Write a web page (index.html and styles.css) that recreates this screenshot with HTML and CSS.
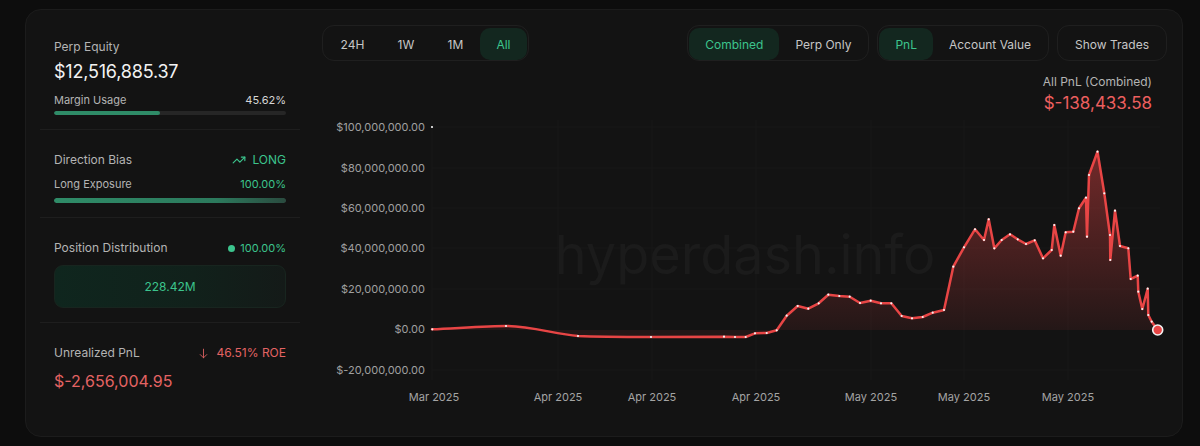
FILE: index.html
```html
<!DOCTYPE html>
<html lang="en">
<head>
<meta charset="utf-8">
<title>Hyperdash</title>
<link rel="stylesheet" href="styles.css">
</head>
<body>
<div class="card">
  <aside class="stats">
    <section class="sec sec-first">
      <div class="label">Perp Equity</div>
      <div class="big">$12,516,885.37</div>
      <div class="row small"><span>Margin Usage</span><span class="val">45.62%</span></div>
      <div class="bar thin"><div class="fill" style="width:45.62%"></div></div>
    </section>
    <section class="sec">
      <div class="row"><span class="label">Direction Bias</span>
        <span class="green long"><svg class="ico" viewBox="0 0 24 24" width="14" height="14"><polyline points="22 7 13.5 15.5 8.5 10.5 2 17"/><polyline points="16 7 22 7 22 13"/></svg>LONG</span></div>
      <div class="row small r2"><span>Long Exposure</span><span class="green">100.00%</span></div>
      <div class="bar thick"><div class="fill grad" style="width:100%"></div></div>
    </section>
    <section class="sec">
      <div class="row"><span class="label">Position Distribution</span>
        <span class="green pct"><i class="dot"></i>100.00%</span></div>
      <div class="dist">228.42M</div>
    </section>
    <section class="sec sec-last">
      <div class="row"><span class="label">Unrealized PnL</span>
        <span class="red roe"><svg class="ico" viewBox="0 0 24 24" width="13" height="13"><line x1="12" y1="4" x2="12" y2="20"/><polyline points="18 14 12 20 6 14"/></svg>46.51% ROE</span></div>
      <div class="big red">$-2,656,004.95</div>
    </section>
  </aside>

  <main class="chartcol">
    <div class="toolbar">
      <div class="seg time">
        <button class="btn">24H</button>
        <button class="btn">1W</button>
        <button class="btn">1M</button>
        <button class="btn active">All</button>
      </div>
      <div class="seggroup">
        <div class="seg">
          <button class="btn active">Combined</button>
          <button class="btn">Perp Only</button>
        </div>
        <div class="seg">
          <button class="btn active">PnL</button>
          <button class="btn">Account Value</button>
        </div>
        <div class="seg">
          <button class="btn">Show Trades</button>
        </div>
      </div>
    </div>
    <div class="pnlhead">
      <div class="pnllabel">All PnL (Combined)</div>
      <div class="pnlval">$-138,433.58</div>
    </div>
    <svg class="chart" viewBox="322 114 845 306" width="845" height="306">
      <defs>
        <linearGradient id="area" gradientUnits="userSpaceOnUse" x1="0" y1="150" x2="0" y2="330">
          <stop offset="0" stop-color="#e84545" stop-opacity="0.45"/>
          <stop offset="1" stop-color="#e84545" stop-opacity="0.08"/>
        </linearGradient>
      </defs>
      <g class="grid">
        <line x1="432" y1="127" x2="1160" y2="127"/>
        <line x1="432" y1="168" x2="1160" y2="168"/>
        <line x1="432" y1="208" x2="1160" y2="208"/>
        <line x1="432" y1="248" x2="1160" y2="248"/>
        <line x1="432" y1="289" x2="1160" y2="289"/>
        <line x1="432" y1="370" x2="1160" y2="370"/>
        <line x1="432" y1="120" x2="432" y2="380"/>
        <line x1="558" y1="120" x2="558" y2="380"/>
        <line x1="652" y1="120" x2="652" y2="380"/>
        <line x1="756" y1="120" x2="756" y2="380"/>
        <line x1="871" y1="120" x2="871" y2="380"/>
        <line x1="964" y1="120" x2="964" y2="380"/>
        <line x1="1068" y1="120" x2="1068" y2="380"/>
      </g>
      <text class="watermark" x="745" y="274" text-anchor="middle">hyperdash.info</text>
      <g class="ylab">
        <text x="425" y="131">$100,000,000.00</text>
        <text x="425" y="172">$80,000,000.00</text>
        <text x="425" y="212">$60,000,000.00</text>
        <text x="425" y="252">$40,000,000.00</text>
        <text x="425" y="293">$20,000,000.00</text>
        <text x="425" y="333">$0.00</text>
        <text x="425" y="374">$-20,000,000.00</text>
      </g>
      <g class="xlab">
        <text x="434" y="401">Mar 2025</text>
        <text x="558" y="401">Apr 2025</text>
        <text x="652" y="401">Apr 2025</text>
        <text x="756" y="401">Apr 2025</text>
        <text x="871" y="401">May 2025</text>
        <text x="964" y="401">May 2025</text>
        <text x="1068" y="401">May 2025</text>
      </g>
      <path class="area" d="M432,329.3 C460,328 490,326 506,326 C530,326 555,334 578,336 C600,337 630,337 651,337 L724,336.7 L735,337 L745.7,337 L755,333.3 L766.7,333 L776.7,330.3 L786.7,315.7 L797.7,306 L808.3,308.7 L818.7,303.3 L828.3,294.7 L839.3,296 L849.7,296.7 L860,303 L870.7,300.7 L881,303.3 L891.3,303.3 L901.7,316 L912,318.3 L922.7,317 L932.7,312.7 L944,310 L953.3,266.7 L964,247.3 L975,229.3 L984,240 L988.7,219.3 L994.3,248.3 L1001.7,240 L1010,234.3 L1017.7,239.3 L1026,244 L1034.7,240.3 L1043,258.3 L1051.7,250 L1054.3,225 L1060.7,255.7 L1065.7,232.3 L1073.3,231.7 L1079,208.3 L1086,197.7 L1087,236.7 L1089,175 L1097.5,151.7 L1104.3,193.3 L1110,235 L1110.3,260 L1115,210.7 L1120,246 L1128.3,248.3 L1130.7,279 L1137.7,275.7 L1138.3,291.7 L1142.3,309 L1147.7,288.7 L1148.3,315 L1151.7,321.7 L1157.7,330 L432,330 Z"/>
      <path class="line" d="M432,329.3 C460,328 490,326 506,326 C530,326 555,334 578,336 C600,337 630,337 651,337 L724,336.7 L735,337 L745.7,337 L755,333.3 L766.7,333 L776.7,330.3 L786.7,315.7 L797.7,306 L808.3,308.7 L818.7,303.3 L828.3,294.7 L839.3,296 L849.7,296.7 L860,303 L870.7,300.7 L881,303.3 L891.3,303.3 L901.7,316 L912,318.3 L922.7,317 L932.7,312.7 L944,310 L953.3,266.7 L964,247.3 L975,229.3 L984,240 L988.7,219.3 L994.3,248.3 L1001.7,240 L1010,234.3 L1017.7,239.3 L1026,244 L1034.7,240.3 L1043,258.3 L1051.7,250 L1054.3,225 L1060.7,255.7 L1065.7,232.3 L1073.3,231.7 L1079,208.3 L1086,197.7 L1087,236.7 L1089,175 L1097.5,151.7 L1104.3,193.3 L1110,235 L1110.3,260 L1115,210.7 L1120,246 L1128.3,248.3 L1130.7,279 L1137.7,275.7 L1138.3,291.7 L1142.3,309 L1147.7,288.7 L1148.3,315 L1151.7,321.7 L1157.7,330"/>
      <g class="pts">
        <circle cx="432" cy="127" r="1.2"/>
        <circle cx="432.3" cy="329.3"/><circle cx="506" cy="326"/><circle cx="578" cy="336"/><circle cx="651" cy="337"/>
        <circle cx="724" cy="336.7"/><circle cx="735" cy="337"/><circle cx="745.7" cy="337"/><circle cx="755" cy="333.3"/>
        <circle cx="766.7" cy="333"/><circle cx="776.7" cy="330.3"/><circle cx="786.7" cy="315.7"/><circle cx="797.7" cy="306"/>
        <circle cx="808.3" cy="308.7"/><circle cx="818.7" cy="303.3"/><circle cx="828.3" cy="294.7"/><circle cx="839.3" cy="296"/>
        <circle cx="849.7" cy="296.7"/><circle cx="860" cy="303"/><circle cx="870.7" cy="300.7"/><circle cx="881" cy="303.3"/>
        <circle cx="891.3" cy="303.3"/><circle cx="901.7" cy="316"/><circle cx="912" cy="318.3"/><circle cx="922.7" cy="317"/>
        <circle cx="932.7" cy="312.7"/><circle cx="944" cy="310"/><circle cx="953.3" cy="266.7"/><circle cx="964" cy="247.3"/>
        <circle cx="975" cy="229.3"/><circle cx="984" cy="240"/><circle cx="988.7" cy="219.3"/><circle cx="994.3" cy="248.3"/>
        <circle cx="1001.7" cy="240"/><circle cx="1010" cy="234.3"/><circle cx="1017.7" cy="239.3"/><circle cx="1026" cy="244"/>
        <circle cx="1034.7" cy="240.3"/><circle cx="1043" cy="258.3"/><circle cx="1051.7" cy="250"/><circle cx="1054.3" cy="225"/>
        <circle cx="1060.7" cy="255.7"/><circle cx="1065.7" cy="232.3"/><circle cx="1073.3" cy="231.7"/><circle cx="1079" cy="208.3"/>
        <circle cx="1086" cy="197.7"/><circle cx="1087" cy="236.7"/><circle cx="1089" cy="175"/><circle cx="1097.5" cy="151.7"/>
        <circle cx="1104.3" cy="193.3"/><circle cx="1110" cy="235"/><circle cx="1110.3" cy="260"/><circle cx="1115" cy="210.7"/>
        <circle cx="1120" cy="246"/><circle cx="1128.3" cy="248.3"/><circle cx="1130.7" cy="279"/><circle cx="1137.7" cy="275.7"/>
        <circle cx="1138.3" cy="291.7"/><circle cx="1142.3" cy="309"/><circle cx="1147.7" cy="288.7"/><circle cx="1148.3" cy="315"/>
        <circle cx="1151.7" cy="321.7"/>
      </g>
      <circle class="enddot" cx="1157.7" cy="330" r="5"/>
    </svg>
  </main>
</div>
</body>
</html>
```

FILE: styles.css
```css
* { box-sizing: border-box; }
html, body { margin: 0; padding: 0; }
body {
  background: #0d0d0d;
  font-family: Inter, "Liberation Sans", sans-serif;
  color: #e8e8e8;
  width: 1200px;
  height: 446px;
  overflow: hidden;
  padding: 9px 17px 0 25px;
}
.card {
  height: 428px;
  background: #131313;
  border: 1px solid #1c1c1c;
  border-radius: 16px;
  padding: 15px 15px 0 14px;
  display: grid;
  grid-template-columns: 260px 845px;
  column-gap: 22px;
}
.stats { display: flex; flex-direction: column; }
.sec {
  padding: 22px 14px 14px;
  border-bottom: 1px solid #1e1e1e;
}
.sec-first { padding-top: 14px; padding-bottom: 14px; }
.sec-last { border-bottom: none; }
.label { font-size: 12px; line-height: 16px; color: #b4b4b4; }
.big { font-size: 18px; line-height: 24px; color: #f2f2f2; margin-top: 5px; letter-spacing: -0.2px; }
.big.red { font-size: 16px; margin-top: 8px; color: #e36363; letter-spacing: 0; }
.row { display: flex; justify-content: space-between; align-items: center; line-height: 16px; font-size: 12px; }
.row.small { font-size: 11px; line-height: 14px; color: #b4b4b4; margin-top: 9px; }
.row.small .val { color: #d6d6d6; }
.green { color: #3cc48d; }
.red { color: #e36363; }
.long, .roe, .pct { display: inline-flex; align-items: center; gap: 6px; }
.ico { fill: none; stroke: currentColor; stroke-width: 2; stroke-linecap: round; stroke-linejoin: round; }
.roe .ico { stroke-width: 1.6; }
.dot { width: 7px; height: 7px; border-radius: 50%; background: #3cc48d; display: inline-block; margin-right: -1px; }
.pct { font-size: 11px; }
.row.r2 { margin-top: 9px; }
.bar { background: #262626; border-radius: 4px; overflow: hidden; }
.bar.thin { height: 4px; margin-top: 4px; }
.bar.thick { height: 5px; margin-top: 7px; }
.fill { height: 100%; background: #2f8c68; border-radius: 4px; }
.fill.grad { background: linear-gradient(90deg, #2f8c68 0%, #2c7a5d 70%, #2a4b3f 100%); }
.dist {
  margin-top: 9px;
  height: 43px;
  border-radius: 9px;
  background: linear-gradient(90deg, #0f261e 0%, #11211b 60%, #141a18 100%);
  border: 1px solid #18251f;
  display: flex; align-items: center; justify-content: center;
  font-size: 12px; color: #3cc48d;
}

.chartcol { display: flex; flex-direction: column; }
.toolbar { display: flex; justify-content: space-between; height: 36px; }
.seggroup { display: flex; gap: 8px; }
.seg {
  display: flex;
  border: 1px solid #1f1f1f;
  border-radius: 12px;
  padding: 1px;
  height: 36px;
}
.btn {
  font-family: Inter, "Liberation Sans", sans-serif;
  font-size: 12px;
  color: #c6c6c6;
  background: transparent;
  border: none;
  border-radius: 10px;
  padding: 0 16px;
  height: 32px;
  margin: 1px 0;
  cursor: pointer;
}
.time .btn { padding: 0 16.6px; }
.btn.active { background: #13271f; color: #3cc48d; }
.pnlhead { text-align: right; padding-right: 15px; margin-top: 13px; }
.pnllabel { font-size: 12px; line-height: 16px; color: #b4b4b4; }
.pnlval { font-size: 17px; line-height: 24px; color: #ec5f5f; margin-top: 1px; }
.chart { display: block; overflow: visible; margin-top: -1px; }
.grid line { stroke: #191919; stroke-width: 1; }
.watermark { font-family: Inter, "Liberation Sans", sans-serif; font-size: 54px; fill: #1b1b1b; }
.ylab text { font-family: Inter, "Liberation Sans", sans-serif; font-size: 11px; fill: #a0a0a0; text-anchor: end; }
.xlab text { font-family: Inter, "Liberation Sans", sans-serif; font-size: 11px; fill: #a4a4a4; text-anchor: middle; }
.area { fill: url(#area); }
.line { fill: none; stroke: #e84545; stroke-width: 2.5; stroke-linejoin: round; stroke-linecap: round; }
.pts circle { fill: #f4f4f4; r: 1.1px; }
.enddot { fill: #e84545; stroke: #f2f2f2; stroke-width: 1.6; }
```
